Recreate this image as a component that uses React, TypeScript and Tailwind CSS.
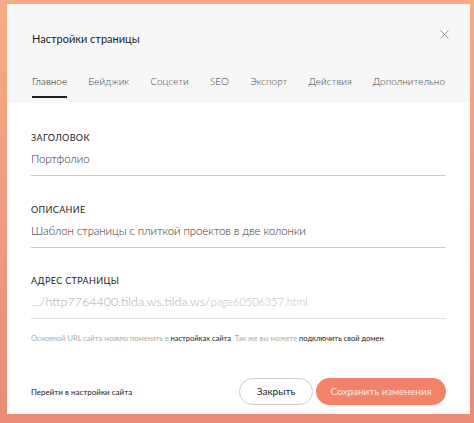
import { X } from 'lucide-react';

const TABS = ['Главное', 'Бейджик', 'Соцсети', 'SEO', 'Экспорт', 'Действия', 'Дополнительно'];

export default function App() {
  return (
    <div
      className="h-[423px] w-[474px] overflow-hidden bg-gradient-to-b from-[#f6aa86] to-[#ea8c78] pl-[7px] pt-[4px]"
      style={{ fontFamily: 'Lato, "Noto Sans", sans-serif' }}
    >
      <div className="flex h-[410px] w-[463px] flex-col bg-white">
        <div className="bg-[#f7f7f7] px-[25px]">
          <div className="flex h-[70px] items-center justify-between">
            <span className="text-[11px] text-[#222]">Настройки страницы</span>
            <X className="mr-[-7px] mt-[-9px] h-[15px] w-[15px] text-[#777]" strokeWidth={1.2} />
          </div>
          <div className="flex h-[29px] w-[413px] items-start justify-between">
            {TABS.map((t, i) => (
              <div
                key={t}
                className={
                  i === 0
                    ? 'border-b-2 border-[#222] pb-[7px] text-[10px] font-light text-[#222]'
                    : 'pb-[7px] text-[10px] font-light text-[#444]'
                }
              >
                {t}
              </div>
            ))}
          </div>
        </div>

        <div className="flex flex-1 flex-col px-[24px]">
          <Field label="Заголовок" value="Портфолио" top="mt-[29px]" />
          <Field
            label="Описание"
            value="Шаблон страницы с плиткой проектов в две колонки"
            top="mt-[28px]"
          />
          <div className="mt-[27px]">
            <div className="text-[9px] leading-[12px] uppercase tracking-[0.04em] text-[#222]">Адрес страницы</div>
            <div className="mt-[7px] border-b border-[#ddd] pb-[8px] text-[12.5px] leading-[16px] font-light text-[#aaa]">
              …/http7764400.tilda.ws.tilda.ws/<span className="text-[11px] text-[#bbb]">page60506357.html</span>
            </div>
            <div className="mt-[15px] text-[7.5px] leading-[10px] text-[#aaa]">
              Основной URL сайта можно поменять в <span className="text-[#222]">настройках сайта</span>. Так же вы можете{' '}
              <span className="text-[#222]">подключить свой домен</span>.
            </div>
          </div>

          <div className="mt-auto mb-[9px] flex items-center">
            <span className="text-[8px] text-[#222]">Перейти в настройки сайта</span>
            <button className="ml-auto h-[27px] w-[74px] rounded-full border border-[#ccc] text-[10px] text-[#222]">
              Закрыть
            </button>
            <button className="ml-[3px] h-[27px] w-[130px] rounded-full bg-[#f4826a] text-[10px] text-[#fde8e0]">
              Сохранить изменения
            </button>
          </div>
        </div>
      </div>
    </div>
  );
}

function Field({ label, value, top }: { label: string; value: string; top: string }) {
  return (
    <div className={top}>
      <div className="text-[9px] leading-[12px] uppercase tracking-[0.04em] text-[#222]">{label}</div>
      <div className="mt-[7px] border-b border-[#ccc] pb-[8px] text-[11.5px] leading-[16px] font-light tracking-[-0.01em] text-[#333]">
        {value}
      </div>
    </div>
  );
}
